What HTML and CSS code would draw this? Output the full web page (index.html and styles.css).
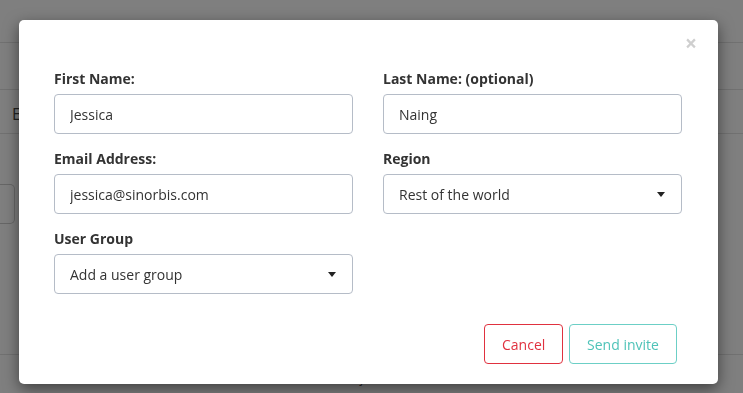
FILE: index.html
```html
<!DOCTYPE html>
<html lang="en">
<head>
    <meta charset="UTF-8">
    <meta name="viewport" content="width=device-width, initial-scale=1.0">
    <title>Invite user</title>
    <link rel="stylesheet" href="styles.css">
</head>
<body>
    <!-- Page behind the modal -->
    <div class="page">
        <div class="page-top"></div>
        <div class="page-bar"></div>
        <div class="page-tabs"><span>E</span></div>
        <div class="page-filter">
            <div class="page-select"></div>
        </div>
        <div class="page-list"></div>
        <div class="page-row">jessica@sinorbis.com</div>
    </div>

    <div class="overlay"></div>

    <!-- Invite modal -->
    <div class="modal">
        <div class="modal-header">
            <button class="close" type="button">&times;</button>
        </div>

        <form class="invite-form">
            <div class="field">
                <label for="first-name">First Name:</label>
                <input type="text" id="first-name" value="Jessica">
            </div>
            <div class="field">
                <label for="last-name">Last Name: (optional)</label>
                <input type="text" id="last-name" value="Naing">
            </div>
            <div class="field">
                <label for="email">Email Address:</label>
                <input type="email" id="email" value="jessica@sinorbis.com">
            </div>
            <div class="field">
                <label for="region">Region</label>
                <div class="select">
                    <span>Rest of the world</span>
                    <i class="caret"></i>
                </div>
            </div>
            <div class="field">
                <label for="user-group">User Group</label>
                <div class="select">
                    <span>Add a user group</span>
                    <i class="caret"></i>
                </div>
            </div>
        </form>

        <div class="modal-footer">
            <button class="btn btn-cancel" type="button">Cancel</button>
            <button class="btn btn-send" type="button">Send invite</button>
        </div>
    </div>
</body>
</html>
```

FILE: styles.css
```css
body {
    margin: 0;
    font-family: 'Open Sans', 'Noto Sans', sans-serif;
    color: #333;
    background: #fff;
    height: 393px;
    overflow: hidden;
}

/* background page */
.page {
    height: 393px;
}

.page-top {
    height: 42px;
    border-bottom: 1px solid #e2e2e2;
}

.page-bar {
    height: 46px;
    border-bottom: 1px solid #e2e2e2;
}

.page-tabs {
    height: 43px;
    border-bottom: 1px solid #e2e2e2;
    padding-left: 12px;
    font-size: 16px;
    line-height: 48px;
    color: #444;
}

.page-filter {
    padding-top: 50px;
    height: 170px;
    border-bottom: 1px solid #e2e2e2;
}

.page-select {
    width: 14px;
    height: 38px;
    border: 1px solid #ccc;
    border-left: none;
    border-radius: 0 5px 5px 0;
}

.page-row {
    padding: 16px 0 0 360px;
    font-size: 12px;
    line-height: 16px;
    color: #444;
}

.overlay {
    position: fixed;
    inset: 0;
    background: rgba(0, 0, 0, 0.5);
}

/* modal */
.modal {
    position: absolute;
    left: 19px;
    top: 20px;
    width: 699px;
    height: 364px;
    background: #fff;
    border-radius: 5px;
    box-shadow: 0 5px 15px rgba(0, 0, 0, 0.5);
    box-sizing: border-box;
}

.modal-header {
    height: 49px;
    display: flex;
    justify-content: flex-end;
    align-items: flex-start;
    padding-right: 21px;
}

.close {
    margin-top: 13px;
    padding: 0;
    border: none;
    background: none;
    font-family: 'Open Sans', sans-serif;
    font-size: 21px;
    font-weight: 700;
    line-height: 21px;
    color: #cfcfcf;
    cursor: pointer;
}

.invite-form {
    display: grid;
    grid-template-columns: 299px 299px;
    column-gap: 30px;
    row-gap: 15px;
    padding: 0 35px;
}

.field label {
    display: block;
    font-size: 14px;
    font-weight: 700;
    line-height: 20px;
    margin-bottom: 5px;
    color: #333;
}

.field input,
.select {
    width: 100%;
    height: 40px;
    box-sizing: border-box;
    padding: 0 15px;
    border: 1px solid #b5bcc7;
    border-radius: 4px;
    font-family: 'Open Sans', sans-serif;
    font-size: 14px;
    color: #333;
    background: #fff;
}

.select {
    display: flex;
    align-items: center;
    justify-content: space-between;
}

.caret {
    width: 0;
    height: 0;
    border-left: 4px solid transparent;
    border-right: 4px solid transparent;
    border-top: 5px solid #222;
    margin-right: 1px;
}

.modal-footer {
    display: flex;
    justify-content: flex-end;
    gap: 6px;
    padding: 30px 41px 0 0;
}

.btn {
    height: 40px;
    padding: 0 17px;
    background: #fff;
    border-radius: 4px;
    font-family: 'Open Sans', sans-serif;
    font-size: 14px;
    cursor: pointer;
}

.btn-cancel {
    width: 79px;
    border: 1px solid #e0313f;
    color: #e0313f;
}

.btn-send {
    width: 108px;
    border: 1px solid #6ccfc6;
    color: #4ec3b8;
}
```
